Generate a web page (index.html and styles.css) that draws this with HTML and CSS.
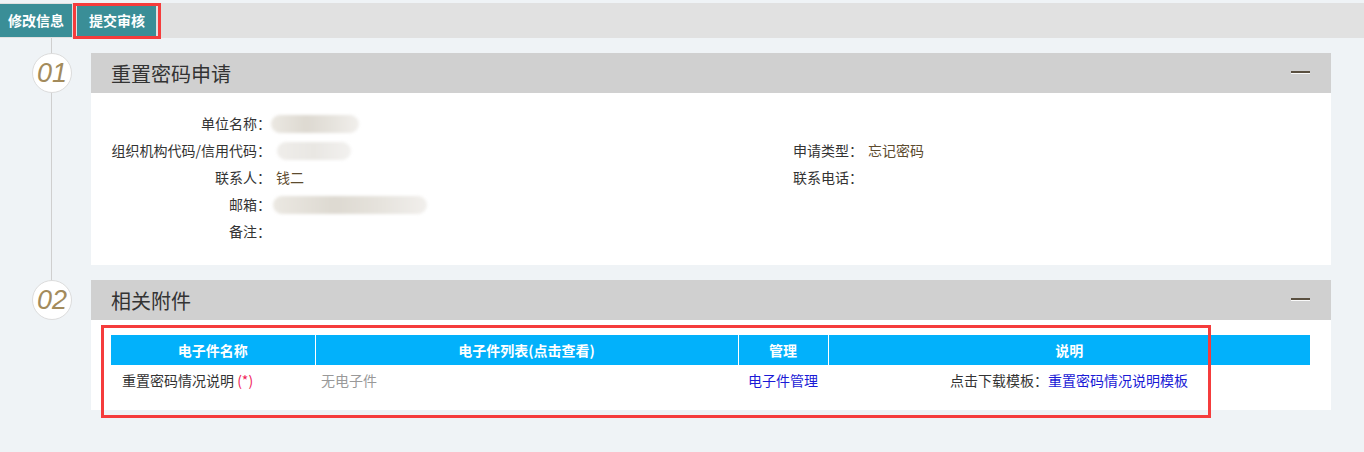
FILE: index.html
```html
<!DOCTYPE html>
<html lang="zh-CN">
<head>
    <meta charset="UTF-8">
    <meta name="viewport" content="width=device-width, initial-scale=1.0">
    <title>重置密码申请</title>
    <link rel="stylesheet" href="styles.css">
</head>
<body>
    <div class="topbar">
        <a class="tab">修改信息</a>
        <a class="tab tab-marked">提交审核</a>
        <div class="mark mark-tab"></div>
    </div>

    <div class="steps">
        <div class="step">
            <div class="step-num">01</div>
            <div class="panel">
                <div class="panel-head">
                    <span class="panel-title">重置密码申请</span>
                    <span class="collapse"></span>
                </div>
                <div class="panel-body">
                    <div class="info-grid">
                        <div class="label">单位名称：</div>
                        <div class="value"><span class="blur blur-name"></span></div>
                        <div class="label"></div>
                        <div class="value"></div>

                        <div class="label">组织机构代码/信用代码：</div>
                        <div class="value"><span class="blur blur-code"></span></div>
                        <div class="label">申请类型：</div>
                        <div class="value">忘记密码</div>

                        <div class="label">联系人：</div>
                        <div class="value">钱二</div>
                        <div class="label">联系电话：</div>
                        <div class="value"></div>

                        <div class="label">邮箱：</div>
                        <div class="value"><span class="blur blur-mail"></span></div>
                        <div class="label"></div>
                        <div class="value"></div>

                        <div class="label">备注：</div>
                        <div class="value"></div>
                        <div class="label"></div>
                        <div class="value"></div>
                    </div>
                </div>
            </div>
        </div>

        <div class="step">
            <div class="step-num">02</div>
            <div class="panel">
                <div class="panel-head">
                    <span class="panel-title">相关附件</span>
                    <span class="collapse"></span>
                </div>
                <div class="panel-body attach-body">
                    <table class="attach">
                        <colgroup>
                            <col class="c-name">
                            <col class="c-list">
                            <col class="c-manage">
                            <col>
                        </colgroup>
                        <thead>
                            <tr>
                                <th>电子件名称</th>
                                <th>电子件列表(点击查看)</th>
                                <th>管理</th>
                                <th>说明</th>
                            </tr>
                        </thead>
                        <tbody>
                            <tr>
                                <td class="t-name">重置密码情况说明 <span class="required">(*)</span></td>
                                <td class="t-empty">无电子件</td>
                                <td class="t-center"><a class="link">电子件管理</a></td>
                                <td class="t-center">点击下载模板：<a class="link">重置密码情况说明模板</a></td>
                            </tr>
                        </tbody>
                    </table>
                    <div class="mark mark-table"></div>
                </div>
            </div>
        </div>
    </div>
</body>
</html>
```

FILE: styles.css
```css
body {
    margin: 0;
    background-color: #eff3f6;
    font-family: "Noto Sans CJK SC", "Liberation Sans", sans-serif;
    font-size: 14px;
    color: #333;
}
.topbar {
    position: relative;
    margin-top: 3px;
    height: 35px;
    background-color: #e1e1e1;
    display: flex;
    gap: 5px;
}
.tab {
    margin-top: 1px;
    height: 33px;
    line-height: 33px;
    padding: 0 8px;
    background-color: #3a8e97;
    color: #fff;
    font-weight: bold;
    font-size: 14px;
}
.tab-marked {
    padding: 0 11px 0 12px;
}
.mark {
    position: absolute;
    border: 3px solid #f53c3c;
    box-sizing: border-box;
}
.mark-tab {
    left: 73px;
    top: 0;
    width: 88px;
    height: 36px;
}

/* steps with a timeline on the left */
.steps {
    position: relative;
    padding: 15px 33px 40px 0;
}
.steps::before {
    content: "";
    position: absolute;
    left: 51px;
    top: 0;
    width: 1px;
    height: 243px;
    background-color: #cfcfcf;
}
.step {
    display: flex;
    align-items: flex-start;
    margin-bottom: 15px;
}
.step-num {
    position: relative;
    margin-left: 32px;
    margin-right: 19px;
    width: 38px;
    height: 38px;
    border: 1px solid #dcdcdc;
    border-radius: 50%;
    background: #fff;
    text-align: center;
    line-height: 38px;
    font-family: "Liberation Sans", sans-serif;
    font-style: italic;
    font-size: 27px;
    color: #a38b5c;
}
.panel {
    flex: 1;
    background: #fff;
}
.panel-head {
    height: 40px;
    background-color: #d0d0d0;
    display: flex;
    align-items: center;
    justify-content: space-between;
    padding: 0 21px 0 20px;
}
.panel-title {
    font-size: 20px;
    color: #333;
}
.collapse {
    width: 19px;
    height: 2px;
    margin-top: -3px;
    background-color: #5a5040;
    box-shadow: 0 1px 0 #fafafa;
}
.panel-body {
    padding: 16px 21px 21px 20px;
}

/* applicant info */
.info-grid {
    display: grid;
    grid-template-columns: 160px 422px 160px 1fr;
    column-gap: 5px;
    grid-auto-rows: 27px;
    align-items: center;
}
.label {
    text-align: right;
    color: #333;
}
.value {
    color: #5d4b2e;
}
.blur {
    display: inline-block;
    height: 18px;
    vertical-align: middle;
    border-radius: 9px;
    background: linear-gradient(90deg, #ebe8e2, #ddd9d1 40%, #e6e3dd 70%, #f1efec);
    filter: blur(1.5px);
}
.blur-name {
    width: 88px;
    margin-left: -5px;
}
.blur-code {
    width: 74px;
    margin-left: 1px;
    background: linear-gradient(90deg, #efedea, #e9e7e3 50%, #f2f1ef);
}
.blur-mail {
    width: 154px;
    margin-left: -3px;
}

/* attachments */
.attach-body {
    position: relative;
    padding-top: 15px;
    padding-bottom: 15px;
}
.attach {
    width: 100%;
    border-collapse: collapse;
    table-layout: fixed;
}
.c-name {
    width: 204px;
}
.c-list {
    width: 423px;
}
.c-manage {
    width: 90px;
}
.attach th {
    height: 30px;
    padding: 0;
    background-color: #02b1fb;
    color: #fff;
    font-weight: bold;
    border-left: 1px solid #fff;
}
.attach th:first-child {
    border-left: none;
}
.attach td {
    height: 30px;
    padding: 0;
}
.t-name {
    padding-left: 11px !important;
}
.t-empty {
    padding-left: 6px !important;
    color: #999;
}
.t-center {
    text-align: center;
}
.required {
    color: #f0245a;
}
.link {
    color: #1a1ad6;
}
.mark-table {
    left: 10px;
    top: 5px;
    width: 1110px;
    height: 93px;
}
```
